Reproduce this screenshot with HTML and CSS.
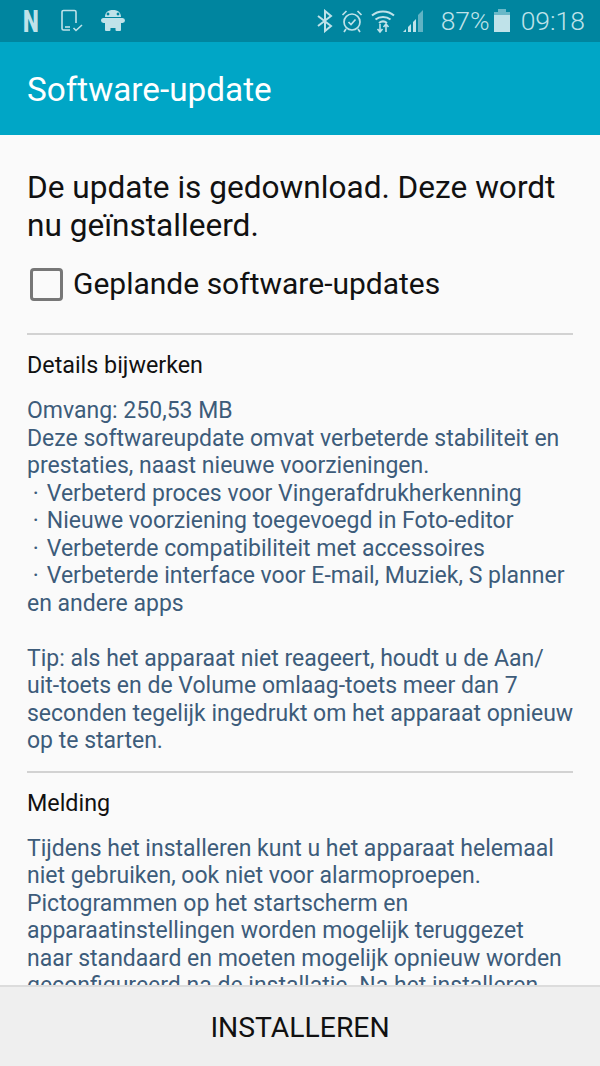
FILE: index.html
```html
<!DOCTYPE html>
<html lang="nl">

<head>
    <meta charset="UTF-8">
    <meta name="viewport" content="width=device-width, initial-scale=1.0">
    <title>Software-update</title>
    <link rel="stylesheet" href="styles.css">
</head>

<body>

    <div class="status-bar">
        <div class="status-left">
            <span class="n-icon">N</span>
            <svg class="icon" width="22" height="24" viewBox="0 0 22 24" fill="none" stroke="currentColor" stroke-width="1.6">
                <path d="M9 21H2.500A1.500 1.500 0 0 1 1 19.500V3a1.500 1.500 0 0 1 1.500-1.500h11A1.500 1.500 0 0 1 15 3v11"/>
                <path d="M4 18h5"/>
                <path d="M12.500 19l2.500 2.500L21 16"/>
            </svg>
            <svg class="icon robot" width="24" height="24" viewBox="0 0 24 24" fill="currentColor">
                <path d="M4 8C4 3.500 7 1 12 1s8 2.500 8 7z M7 3.600a1.400 1.400 0 1 0 0.010 0z M17 3.600a1.400 1.400 0 1 0 0.010 0z" fill-rule="evenodd"/>
                <path d="M2.500 9h19a2.500 2.500 0 0 1 0 5H20v7a1 1 0 0 1-1 1h-3.500a1 1 0 0 1-1-1v-2h-5v2a1 1 0 0 1-1 1H5a1 1 0 0 1-1-1v-7H2.500a2.500 2.500 0 0 1 0-5z"/>
            </svg>
        </div>
        <div class="status-right">
            <svg class="icon" width="16" height="24" viewBox="0 0 16 24" fill="none" stroke="currentColor" stroke-width="2">
                <path d="M1 7l13 10-6 5V2l6 5L1 17"/>
            </svg>
            <svg class="icon alarm" width="22" height="24" viewBox="0 0 22 24" fill="none" stroke="currentColor" stroke-width="1.700">
                <circle cx="11" cy="13" r="8"/>
                <path d="M7.500 13l2.500 2.500 4.500-5"/>
                <path d="M1.500 6l4-4M20.500 6l-4-4M5 20l-2 3M17 20l2 3"/>
            </svg>
            <svg class="icon wifi" width="24" height="26" viewBox="0 0 24 26" fill="none" stroke="currentColor" stroke-width="2">
                <path d="M1 7.500C7 2 17 2 23 7.500"/>
                <path d="M4.500 11.500C8.500 8 15.500 8 19.500 11.500"/>
                <path d="M8 15c2.500-2 5.500-2 8 0"/>
                <path d="M9 16v8M6.500 21L9 24l2.500-3M15 24v-8M12.500 19l2.500-3 2.500 3" stroke-width="1.600"/>
            </svg>
            <svg class="icon signal" width="22" height="24" viewBox="0 0 22 24" fill="currentColor">
                <path d="M0 23h3v-3z"/>
                <path d="M5 23h3v-8l-3 3z"/>
                <path d="M10 23h3V10l-3 3z"/>
                <path d="M15 23h5V1l-5 5z" opacity="0.5"/>
            </svg>
            <span class="status-text battery-text">87%</span>
            <svg class="icon battery" width="16" height="24" viewBox="0 0 16 24" fill="currentColor">
                <path d="M4 0h8v3h4v3H0V3h4z" opacity="0.55"/>
                <path d="M0 6h16v17H0z"/>
            </svg>
            <span class="status-text">09:18</span>
        </div>
    </div>

    <div class="app-bar">Software-update</div>

    <div class="content">
        <h1>De update is gedownload. Deze wordt nu geïnstalleerd.</h1>
        <div class="check-row">
            <span class="checkbox"></span>
            <span>Geplande software-updates</span>
        </div>

        <div class="section">
            <h2>Details bijwerken</h2>
            <p>Omvang: 250,53 MB<br>
                Deze softwareupdate omvat verbeterde stabiliteit en prestaties, naast nieuwe voorzieningen.<br>
                &nbsp;·&nbsp;&hairsp;Verbeterd proces voor Vingerafdrukherkenning<br>
                &nbsp;·&nbsp;&hairsp;Nieuwe voorziening toegevoegd in Foto-editor<br>
                &nbsp;·&nbsp;&hairsp;Verbeterde compatibiliteit met accessoires<br>
                &nbsp;·&nbsp;&hairsp;Verbeterde interface voor E-mail, Muziek, S planner en andere apps<br>
                <br>
                Tip: als het apparaat niet reageert, houdt u de Aan/<br>uit-toets en de Volume omlaag-toets meer dan 7 seconden tegelijk ingedrukt om het apparaat opnieuw op te starten.</p>
        </div>

        <div class="section">
            <h2>Melding</h2>
            <p>Tijdens het installeren kunt u het apparaat helemaal niet gebruiken, ook niet voor alarmoproepen. Pictogrammen op het startscherm en apparaatinstellingen worden mogelijk teruggezet<br>naar standaard en moeten mogelijk opnieuw worden geconfigureerd na de installatie. Na het installeren</p>
        </div>
    </div>

    <div class="footer">INSTALLEREN</div>

</body>

</html>
```

FILE: styles.css
```css
* {
    box-sizing: border-box;
}

body {
    margin: 0;
    height: 1066px;
    overflow: hidden;
    display: flex;
    flex-direction: column;
    font-family: Roboto, sans-serif;
    background-color: #fafafa;
}

.status-bar {
    height: 42px;
    flex: none;
    display: flex;
    justify-content: space-between;
    align-items: center;
    padding: 0 15px 0 23px;
    background-color: #00859f;
    color: #bfe2e9;
}

.status-left,
.status-right {
    display: flex;
    align-items: center;
}

.status-left {
    gap: 18px;
}

.status-right {
    gap: 8px;
}

.icon {
    display: block;
}

.n-icon {
    font-size: 31px;
    font-weight: 900;
    line-height: 1;
    transform: scaleX(0.72);
    transform-origin: left;
    width: 20px;
}

.status-text {
    font-size: 26.500px;
    line-height: 1;
    font-weight: 300;
}

.battery-text {
    margin-left: 8px;
    margin-right: -4px;
}

.battery {
    margin-right: 3px;
}

.app-bar {
    height: 93px;
    flex: none;
    display: flex;
    align-items: center;
    padding: 2px 0 0 27px;
    background-color: #00a6c6;
    color: white;
    font-size: 33.300px;
}

.content {
    flex: 1;
    min-height: 0;
    overflow: hidden;
    padding: 34px 27px 0;
}

h1 {
    margin: 0;
    font-size: 31.600px;
    font-weight: 400;
    line-height: 38px;
    color: #111;
}

.check-row {
    display: flex;
    align-items: center;
    gap: 10px;
    margin-top: 20px;
    padding-left: 3px;
    font-size: 30px;
    line-height: 38px;
    color: #111;
}

.checkbox {
    width: 33px;
    height: 33px;
    border: 3px solid #777;
    border-radius: 4px;
}

.section {
    margin-top: 30px;
    padding-top: 16px;
    border-top: 2px solid #d2d2d2;
}

.section + .section {
    margin-top: 16px;
}

h2 {
    margin: 0;
    font-size: 23.300px;
    font-weight: 400;
    line-height: 28px;
    color: #111;
}

p {
    margin: 18px -6px 0 0;
    font-size: 23px;
    font-weight: 400;
    line-height: 27.500px;
    color: #3d5c7a;
}

.footer {
    height: 81px;
    flex: none;
    display: flex;
    align-items: center;
    justify-content: center;
    padding-top: 1px;
    border-top: 2px solid #dcdcdc;
    background-color: #efefef;
    color: #111;
    font-size: 28.300px;
}
```
